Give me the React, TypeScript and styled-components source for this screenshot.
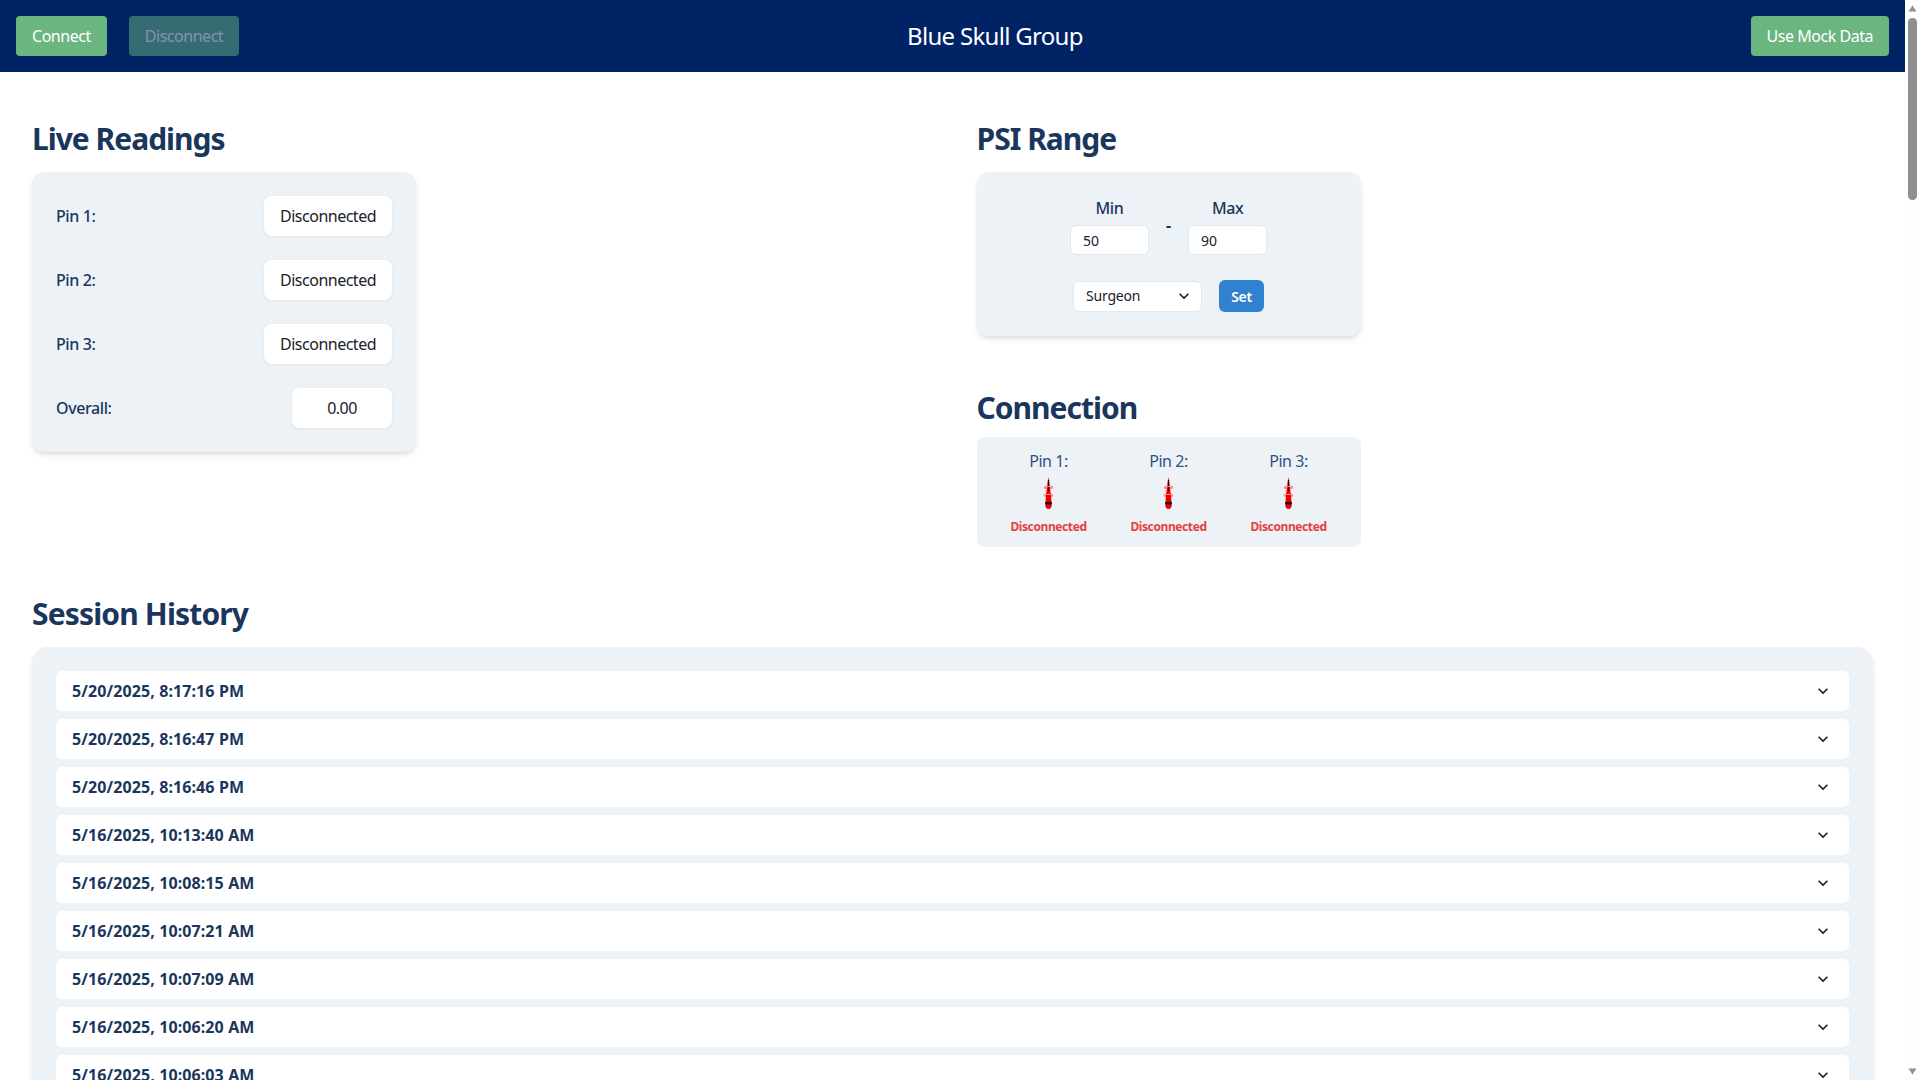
import React from 'react';
import styled, { createGlobalStyle } from 'styled-components';

const Global = createGlobalStyle`
    body {
        margin: 0;
        background: #ffffff;
        font-family: "Noto Sans", "Open Sans", sans-serif;
        color: #1a202c;
    }
    * { box-sizing: border-box; }
`;

const Shell = styled.div`
    height: 100vh;
    display: flex;
    overflow: hidden;
`;

const Page = styled.div`
    flex: 1;
    min-width: 0;
    overflow: hidden;
`;

const ScrollRail = styled.div`
    width: 15px;
    padding: 5px 3px;
    background: #fdfdfd;
    display: flex;
    flex-direction: column;
    align-items: center;
`;

const ScrollThumb = styled.div`
    width: 9px;
    height: 182px;
    margin-top: 6px;
    border-radius: 5px;
    background: #8f8f8f;
`;

const ScrollSpacer = styled.div`
    flex: 1;
`;

const Header = styled.header`
    height: 72px;
    padding: 0 16px;
    background: #002366;
    display: flex;
    align-items: center;
    justify-content: space-between;
`;

const ButtonGroup = styled.div`
    display: flex;
    gap: 22px;
`;

const HeaderButton = styled.button<{ $disabled?: boolean }>`
    height: 40px;
    padding: 0 16px;
    border: none;
    border-radius: 4px;
    background: #6bb581;
    color: #ffffff;
    font: 400 16px/24px "Noto Sans", sans-serif;
    letter-spacing: -0.47px;
    opacity: ${(p) => (p.$disabled ? 0.5 : 1)};
`;

const Title = styled.div`
    color: #ffffff;
    font-size: 24px;
    line-height: 32px;
    letter-spacing: -0.7px;
`;

const Main = styled.main`
    padding: 32px;
`;

const TopGrid = styled.div`
    display: grid;
    grid-template-columns: 1fr 1fr;
    column-gap: 48px;
`;

const Column = styled.section`
    display: flex;
    flex-direction: column;
    align-items: flex-start;
`;

const Heading = styled.h2`
    margin: 0 0 11px;
    height: 57px;
    display: flex;
    align-items: flex-end;
    color: #1a365d;
    font-size: 30px;
    line-height: 44px;
    font-weight: 700;
    letter-spacing: -1px;
`;

const ConnectionHeading = styled(Heading)`
    margin: 50px 0 7px;
    height: 44px;
`;

const HistoryHeading = styled(Heading)`
    margin: 45px 0 11px;
    height: 44px;
    letter-spacing: -0.85px;
`;

const Card = styled.div`
    width: 384px;
    padding: 24px;
    background: #edf2f7;
    border-radius: 12px;
    box-shadow: 0 4px 6px -1px rgba(0, 0, 0, 0.1), 0 2px 4px -1px rgba(0, 0, 0, 0.06);
`;

const ReadingsList = styled.div`
    display: flex;
    flex-direction: column;
    gap: 24px;
`;

const ReadingRow = styled.div`
    display: flex;
    align-items: center;
    justify-content: space-between;
`;

const ReadingLabel = styled.span`
    color: #1a365d;
    font-size: 16px;
    font-weight: 500;
    letter-spacing: -0.4px;
`;

const ReadingValue = styled.div`
    min-width: 100px;
    height: 40px;
    padding: 0 16px;
    display: flex;
    align-items: center;
    justify-content: center;
    background: #ffffff;
    border-radius: 8px;
    font-size: 16px;
    letter-spacing: -0.5px;
    box-shadow: 0 1px 3px rgba(0, 0, 0, 0.06);
`;

const RangeRow = styled.div`
    display: flex;
    justify-content: center;
    gap: 17px;
`;

const RangeField = styled.label`
    width: 79px;
    display: flex;
    flex-direction: column;
    align-items: center;
    gap: 5px;
    color: #1a365d;
    font-size: 16px;
    line-height: 24px;
    font-weight: 500;
    letter-spacing: -0.45px;
`;

const RangeDash = styled.span`
    margin-top: 17px;
    color: #1a365d;
    font-size: 16px;
    line-height: 24px;
    font-weight: 700;
`;

const RangeInput = styled.input`
    width: 100%;
    height: 30px;
    padding: 0 12px;
    border: 1px solid #e2e8f0;
    border-radius: 6px;
    background: #ffffff;
    color: #1a202c;
    font: 400 14px "Noto Sans", sans-serif;
    outline: none;
`;

const ControlRow = styled.div`
    margin-top: 25px;
    display: flex;
    justify-content: center;
    align-items: center;
    gap: 17px;
`;

const SelectWrap = styled.div`
    position: relative;
    width: 129px;
    height: 31px;
    svg {
        position: absolute;
        right: 8px;
        top: 5px;
        pointer-events: none;
    }
`;

const RoleSelect = styled.select`
    width: 100%;
    height: 100%;
    padding: 0 12px 2px;
    appearance: none;
    border: 1px solid #e2e8f0;
    border-radius: 6px;
    background: #ffffff;
    color: #1a202c;
    font: 400 14px "Noto Sans", sans-serif;
    letter-spacing: -0.2px;
`;

const SetButton = styled.button`
    width: 45px;
    height: 32px;
    padding: 0;
    border: none;
    border-radius: 6px;
    background: #3182ce;
    color: #ffffff;
    font: 600 14px "Noto Sans", sans-serif;
    letter-spacing: -0.3px;
`;

const ConnectionCard = styled.div`
    width: 384px;
    height: 110px;
    padding: 12px 0 0;
    background: #edf2f7;
    border-radius: 8px;
    display: flex;
    justify-content: center;
`;

const PinColumn = styled.div`
    width: 120px;
    display: flex;
    flex-direction: column;
    align-items: center;
`;

const PinLabel = styled.div`
    height: 28px;
    color: #2f5280;
    font-size: 16px;
    line-height: 24px;
    letter-spacing: -0.45px;
`;

const PinStatus = styled.div`
    margin-top: 9px;
    color: #e53e3e;
    font-size: 12px;
    line-height: 18px;
    font-weight: 700;
    letter-spacing: -0.4px;
`;

const HistoryCard = styled.div`
    padding: 24px;
    background: #edf2f7;
    border-radius: 16px;
    box-shadow: 0 4px 6px -1px rgba(0, 0, 0, 0.1), 0 2px 4px -1px rgba(0, 0, 0, 0.06);
    display: flex;
    flex-direction: column;
    gap: 8px;
`;

const SessionRow = styled.button`
    width: 100%;
    height: 40px;
    flex: none;
    padding: 0 16px;
    border: none;
    border-radius: 6px;
    background: #ffffff;
    display: flex;
    align-items: center;
    justify-content: space-between;
    color: #1a365d;
    font: 700 16px "Noto Sans", sans-serif;
    letter-spacing: 0.1px;
`;

const Chevron = () => (
    <svg width="20" height="20" viewBox="0 0 24 24" fill="#1a202c">
        <path d="M16.59 8.59L12 13.17 7.41 8.59 6 10l6 6 6-6z" />
    </svg>
);

const ScrollArrow = ({ down }: { down?: boolean }) => (
    <svg width="9" height="7" viewBox="0 0 9 7" fill="#8f8f8f">
        <path d={down ? 'M0.5 0.5 H8.5 L4.5 6.5 Z' : 'M4.5 0.5 L8.5 6.5 H0.5 Z'} />
    </svg>
);

const NeedleIcon = () => (
    <svg width="12" height="32" viewBox="0 0 12 32">
        <ellipse cx="5.5" cy="10.5" rx="4.8" ry="1.9" fill="#ff8f8f" />
        <ellipse cx="5.5" cy="18.5" rx="4.8" ry="1.9" fill="#ff8f8f" />
        <path d="M5.5 0 L6.5 6 L7 11 L8 18 L8.7 28 Q8.7 32 5.5 32 Q2.3 32 2.3 28 L3 18 L4 11 L4.5 6 Z" fill="#f20000" />
        <path d="M5.5 3 V14" stroke="#300000" strokeWidth="1.2" />
        <path d="M3.5 9.5 H7.5 M3.2 17.5 H7.8" stroke="#ffb0b0" strokeWidth="0.8" />
        <rect x="2.3" y="25" width="6.4" height="2.4" fill="#100000" />
    </svg>
);

const readings = ['Pin 1:', 'Pin 2:', 'Pin 3:'];

const sessions = [
    '5/20/2025, 8:17:16 PM',
    '5/20/2025, 8:16:47 PM',
    '5/20/2025, 8:16:46 PM',
    '5/16/2025, 10:13:40 AM',
    '5/16/2025, 10:08:15 AM',
    '5/16/2025, 10:07:21 AM',
    '5/16/2025, 10:07:09 AM',
    '5/16/2025, 10:06:20 AM',
    '5/16/2025, 10:06:03 AM',
];

const App = () => (
    <>
        <Global />
        <Shell>
            <Page>
                <Header>
                    <ButtonGroup>
                        <HeaderButton>Connect</HeaderButton>
                        <HeaderButton $disabled disabled>Disconnect</HeaderButton>
                    </ButtonGroup>
                    <Title>Blue Skull Group</Title>
                    <HeaderButton>Use Mock Data</HeaderButton>
                </Header>
                <Main>
                    <TopGrid>
                        <Column>
                            <Heading>Live Readings</Heading>
                            <Card>
                                <ReadingsList>
                                    {readings.map((pin) => (
                                        <ReadingRow key={pin}>
                                            <ReadingLabel>{pin}</ReadingLabel>
                                            <ReadingValue>Disconnected</ReadingValue>
                                        </ReadingRow>
                                    ))}
                                    <ReadingRow>
                                        <ReadingLabel>Overall:</ReadingLabel>
                                        <ReadingValue>0.00</ReadingValue>
                                    </ReadingRow>
                                </ReadingsList>
                            </Card>
                        </Column>
                        <Column>
                            <Heading>PSI Range</Heading>
                            <Card>
                                <RangeRow>
                                    <RangeField>
                                        Min
                                        <RangeInput defaultValue="50" />
                                    </RangeField>
                                    <RangeDash>-</RangeDash>
                                    <RangeField>
                                        Max
                                        <RangeInput defaultValue="90" />
                                    </RangeField>
                                </RangeRow>
                                <ControlRow>
                                    <SelectWrap>
                                        <RoleSelect defaultValue="Surgeon">
                                            <option>Surgeon</option>
                                            <option>Nurse</option>
                                        </RoleSelect>
                                        <Chevron />
                                    </SelectWrap>
                                    <SetButton>Set</SetButton>
                                </ControlRow>
                            </Card>
                            <ConnectionHeading>Connection</ConnectionHeading>
                            <ConnectionCard>
                                {readings.map((pin) => (
                                    <PinColumn key={pin}>
                                        <PinLabel>{pin}</PinLabel>
                                        <NeedleIcon />
                                        <PinStatus>Disconnected</PinStatus>
                                    </PinColumn>
                                ))}
                            </ConnectionCard>
                        </Column>
                    </TopGrid>
                    <section>
                        <HistoryHeading>Session History</HistoryHeading>
                        <HistoryCard>
                            {sessions.map((stamp) => (
                                <SessionRow key={stamp}>
                                    {stamp}
                                    <Chevron />
                                </SessionRow>
                            ))}
                        </HistoryCard>
                    </section>
                </Main>
            </Page>
            <ScrollRail>
                <ScrollArrow />
                <ScrollThumb />
                <ScrollSpacer />
                <ScrollArrow down />
            </ScrollRail>
        </Shell>
    </>
);

export default App;
